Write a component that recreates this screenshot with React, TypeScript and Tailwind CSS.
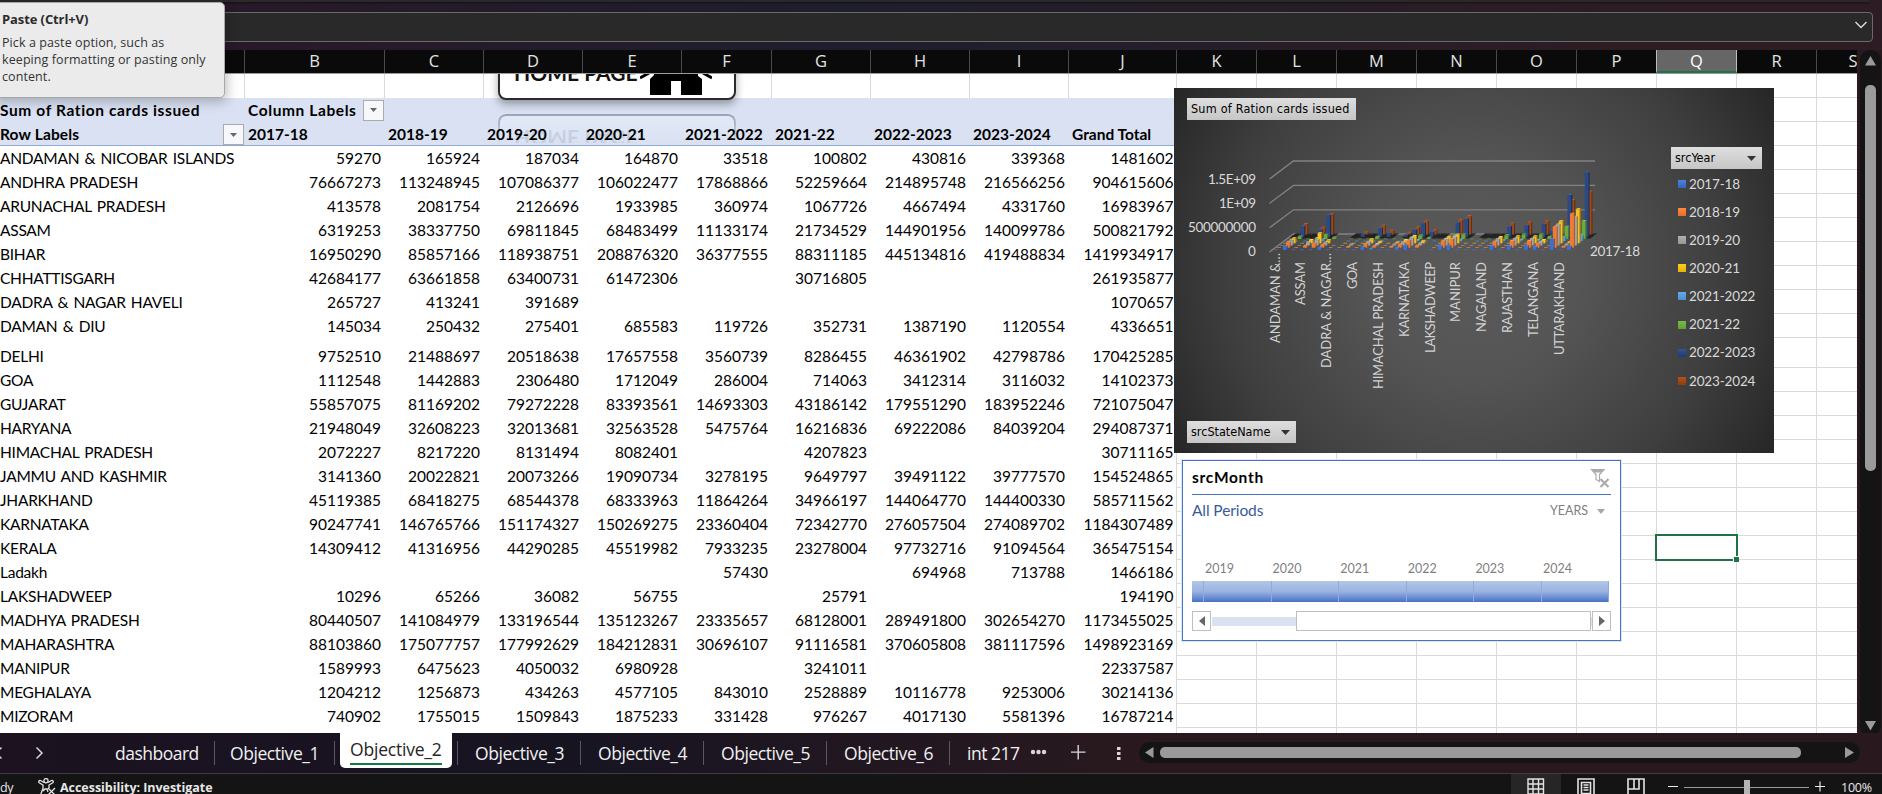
import React from "react";

const LATO = "font-['Lato','Noto_Sans',sans-serif]";
const UI = "font-['Open_Sans','Noto_Sans',sans-serif]";
const TAHOMA = "font-['DejaVu_Sans_Condensed','DejaVu_Sans',sans-serif] [font-stretch:condensed]";

const GRID = "grid grid-cols-[245px_140px_99px_99px_99px_90px_99px_99px_99px_108px_80px_80px_80px_80px_80px_80px_80px_80px_40px]";
const LETTERS = ["A", "B", "C", "D", "E", "F", "G", "H", "I", "J", "K", "L", "M", "N", "O", "P", "Q", "R", "S"];
const YEARS = ["2017-18", "2018-19", "2019-20", "2020-21", "2021-2022", "2021-22", "2022-2023", "2023-2024"];

type Row = [string, string];
const ROWS: Row[] = [
  ["ANDAMAN & NICOBAR ISLANDS", "59270,165924,187034,164870,33518,100802,430816,339368,1481602"],
  ["ANDHRA PRADESH", "76667273,113248945,107086377,106022477,17868866,52259664,214895748,216566256,904615606"],
  ["ARUNACHAL PRADESH", "413578,2081754,2126696,1933985,360974,1067726,4667494,4331760,16983967"],
  ["ASSAM", "6319253,38337750,69811845,68483499,11133174,21734529,144901956,140099786,500821792"],
  ["BIHAR", "16950290,85857166,118938751,208876320,36377555,88311185,445134816,419488834,1419934917"],
  ["CHHATTISGARH", "42684177,63661858,63400731,61472306,,30716805,,,261935877"],
  ["DADRA & NAGAR HAVELI", "265727,413241,391689,,,,,,1070657"],
  ["DAMAN & DIU", "145034,250432,275401,685583,119726,352731,1387190,1120554,4336651"],
  ["DELHI", "9752510,21488697,20518638,17657558,3560739,8286455,46361902,42798786,170425285"],
  ["GOA", "1112548,1442883,2306480,1712049,286004,714063,3412314,3116032,14102373"],
  ["GUJARAT", "55857075,81169202,79272228,83393561,14693303,43186142,179551290,183952246,721075047"],
  ["HARYANA", "21948049,32608223,32013681,32563528,5475764,16216836,69222086,84039204,294087371"],
  ["HIMACHAL PRADESH", "2072227,8217220,8131494,8082401,,4207823,,,30711165"],
  ["JAMMU AND KASHMIR", "3141360,20022821,20073266,19090734,3278195,9649797,39491122,39777570,154524865"],
  ["JHARKHAND", "45119385,68418275,68544378,68333963,11864264,34966197,144064770,144400330,585711562"],
  ["KARNATAKA", "90247741,146765766,151174327,150269275,23360404,72342770,276057504,274089702,1184307489"],
  ["KERALA", "14309412,41316956,44290285,45519982,7933235,23278004,97732716,91094564,365475154"],
  ["Ladakh", ",,,,57430,,694968,713788,1466186"],
  ["LAKSHADWEEP", "10296,65266,36082,56755,,25791,,,194190"],
  ["MADHYA PRADESH", "80440507,141084979,133196544,135123267,23335657,68128001,289491800,302654270,1173455025"],
  ["MAHARASHTRA", "88103860,175077757,177992629,184212831,30696107,91116581,370605808,381117596,1498923169"],
  ["MANIPUR", "1589993,6475623,4050032,6980928,,3241011,,,22337587"],
  ["MEGHALAYA", "1204212,1256873,434263,4577105,843010,2528889,10116778,9253006,30214136"],
  ["MIZORAM", "740902,1755015,1509843,1875233,331428,976267,4017130,5581396,16787214"],
];

const REST: (number | null)[][] = [
  [1, 3, 3, 3, 1, 2, 6, 6],
  [80, 125, 130, 130, 20, 75, 213, 227],
  [2, 3, 3, 3, 1, 2, 8, 8],
  [80, 140, 140, 145, 22, 90, 233, 250],
  [1, 2, 2, 2, 1, 1, 5, 5],
  [85, 140, 140, 145, 22, 90, 257, 275],
  [60, 80, 80, 70, 12, 45, 120, null],
  [3, 8, 8, 8, 1, 4, 15, 15],
  [220, 430, 435, 455, 90, 250, 860, 715],
  [5, 20, 20, 20, 3, 10, null, null],
  [70, 700, 595, 700, 110, 370, 1325, 885],
];
const DATA: (number | null)[][] = [
  ...ROWS.map(([, v]) => v.split(",").slice(0, 8).map((n) => (n === "" ? null : Number(n) / 1e6))),
  ...REST,
];
const COLORS: [string, string, string][] = [
  ["#3f6fce", "#2a4f99", "#5b86dc"],
  ["#f47a2f", "#a9521c", "#ff9a58"],
  ["#a3a3a3", "#6d6d6d", "#bdbdbd"],
  ["#f9c11c", "#a87f06", "#ffd652"],
  ["#4f9ee0", "#2f6a9c", "#73b5ec"],
  ["#69ab40", "#46752a", "#86c45e"],
  ["#2a4a86", "#182c52", "#46619a"],
  ["#a04a1a", "#6a2d0c", "#b5602c"],
];

function Chart3D() {
  const bars: React.ReactNode[] = [];
  for (let s = 7; s >= 0; s--) {
    const dx = (23.5 * (s + 0.5)) / 8;
    const dy = (17.5 * (s + 0.5)) / 8;
    DATA.forEach((row, c) => {
      const v = row[s];
      if (v === null) return;
      const x = 96 + 8.61 * (c + 0.33) + dx;
      const y = 163 - dy;
      const h = v / 20.6;
      if (s >= 6) {
        bars.push(<path key={`f${s}-${c}`} d={`M${x - 3} ${y + 1.6}h8.6l4 -3h-8.6z`} fill="#1d1d1d" opacity="0.85" />);
      }
      if (h < 0.9) {
        bars.push(<rect key={`${s}-${c}`} x={x} y={y - 0.6} width="3.6" height="0.9" fill={s >= 6 ? "#1e1e28" : COLORS[s][0]} opacity={s >= 2 && s < 6 ? 0.65 : 0.9} />);
        return;
      }
      bars.push(
        <g key={`${s}-${c}`}>
          <path d={`M${x + 3.6} ${y}v${-h}l1.3 -1v${h}z`} fill={COLORS[s][1]} />
          <path d={`M${x} ${y - h}l1.3 -1h3.6l-1.3 1z`} fill={COLORS[s][2]} />
          <rect x={x} y={y - h} width="3.7" height={h} fill={COLORS[s][0]} />
        </g>,
      );
    });
  }
  // text, baseline x, text start y, text length
  const labels: [string, number, number, number][] = [
    ["ANDAMAN &…", 105.5, 164, 78], ["ASSAM", 131.3, 174, 43], ["DADRA & NAGAR…", 157.2, 164, 103], ["GOA", 183, 174, 27],
    ["HIMACHAL PRADESH", 208.8, 174, 127], ["KARNATAKA", 234.7, 174, 75], ["LAKSHADWEEP", 260.5, 174, 91], ["MANIPUR", 286.2, 174, 60],
    ["NAGALAND", 312, 174, 70], ["RAJASTHAN", 338, 174, 71], ["TELANGANA", 363.6, 174, 75], ["UTTARAKHAND", 389.5, 174, 93],
  ];
  const axis: [string, number, number][] = [["1.5E+09", 91, 48], ["1E+09", 115, 37], ["500000000", 139, 68], ["0", 163, 8]];
  return (
    <svg width="600" height="365" className={`absolute inset-0 ${LATO}`}>
      {[73, 97.4, 121.8, 146].map((y) => (
        <path key={y} d={`M95.5 ${y + 18}L119.5 ${y}H421`} fill="none" stroke="#828282" strokeWidth="1.3" />
      ))}
      {bars}
      {axis.map(([t, y, w]) => (
        <text key={t} x={82 - w} y={y + 5.3} textLength={w} fontSize="13.5" fill="#d9d9d9">{t}</text>
      ))}
      {labels.map(([t, x, y, w]) => (
        <text key={t} transform={`translate(${x} ${(t.endsWith("…") ? y + 12 - 11 : y) + w + (t.endsWith("…") ? 12 : 0)}) rotate(-90)`} textLength={t.endsWith("…") ? w + 12 : w} fontSize="13" fill="#d2d2d2">{t}</text>
      ))}
      <text x="416" y="168" textLength="50" fontSize="13.5" fill="#d9d9d9">2017-18</text>
    </svg>
  );
}

const LEGEND = [
  "bg-linear-to-b from-[#4f82da] to-[#3763bd]",
  "bg-linear-to-b from-[#fb8a47] to-[#ea6d1a]",
  "bg-linear-to-b from-[#b0b0b0] to-[#969696]",
  "bg-linear-to-b from-[#ffca22] to-[#e8b400]",
  "bg-linear-to-b from-[#66abe8] to-[#4a8fd0]",
  "bg-linear-to-b from-[#77ba4c] to-[#62a038]",
  "bg-linear-to-b from-[#36558f] to-[#1c3a77]",
  "bg-linear-to-b from-[#ac5220] to-[#943c02]",
];

function PivotChart() {
  return (
    <div className="absolute left-[1174px] top-[38px] h-[365px] w-[600px] bg-[radial-gradient(circle_at_50%_50%,#5a5a5a_0%,#555555_30%,#3f3f3f_70%,#262626_100%)]">
      <Chart3D />
      <div className={`absolute left-[13px] top-[10px] flex h-[22px] w-[169px] items-center bg-linear-to-b from-[#dedede] to-[#c6c6c6] pt-px pl-1 text-[12.5px] tracking-[0.22px] whitespace-nowrap text-black ${TAHOMA}`}>Sum of Ration cards issued</div>
      <div className={`absolute left-[13px] top-[333px] flex h-[22px] w-[109px] items-center justify-between bg-linear-to-b from-[#dedede] to-[#c6c6c6] pt-px pr-1.5 pl-1 text-[12.5px] text-black ${TAHOMA}`}>
        srcStateName
        <svg width="9" height="5"><path d="M0 0h9l-4.5 5z" fill="#333" /></svg>
      </div>
      <div className={`absolute left-[497px] top-[59px] flex h-[22px] w-[91px] items-center justify-between bg-linear-to-b from-[#dedede] to-[#c6c6c6] pt-px pr-1.5 pl-1 text-[12.5px] text-black ${TAHOMA}`}>
        srcYear
        <svg width="9" height="5"><path d="M0 0h9l-4.5 5z" fill="#333" /></svg>
      </div>
      <div className={`absolute left-[504px] top-[82px] flex flex-col text-[13.5px] text-[#d9d9d9] ${LATO}`}>
        {YEARS.map((y, i) => (
          <div key={y} className="flex h-[28.1px] items-center gap-[3px] tracking-[-0.16px]">
            <span className={`size-2 ${LEGEND[i]}`} />{y}
          </div>
        ))}
      </div>
    </div>
  );
}

function Timeline() {
  return (
    <div className={`absolute left-[1182px] top-[410px] flex h-[181px] w-[439px] flex-col border border-[#4472c4] bg-white pl-[9px] ring-1 ring-[#dfe6f4] ${LATO}`}>
      <div className="flex h-[34px] w-[419px] items-center justify-between border-b border-[#4472c4]">
        <span className="text-[15.5px] font-bold tracking-[0.7px] text-black">srcMonth</span>
        <svg width="20" height="20" className="mr-px" fill="none" stroke="#ababab">
          <path d="M1.5 1.5h12.5l-4.5 5v7l-3.5 -2v-5z" fill="#fff" strokeWidth="1.2" />
          <path d="M1 1h13l-3 3.5h-7z" fill="#ababab" stroke="none" />
          <path d="M10.5 11l8 8M18.5 11l-8 8" strokeWidth="2.2" />
        </svg>
      </div>
      <div className="flex h-8 w-[419px] items-center justify-between pr-[6px]">
        <span className="text-[15.5px] tracking-[-0.1px] text-[#3a5a9b]">All Periods</span>
        <span className="flex items-center gap-[9px] text-[12.5px] text-[#7f7f7f]">YEARS
          <svg width="8" height="5"><path d="M0 0h8l-4 5z" fill="#a6a6a6" /></svg>
        </span>
      </div>
      <div className="mt-[31px] mb-px flex h-[22px] items-center pl-[13px] text-[12.5px] text-[#7f7f7f]">
        {["2019", "2020", "2021", "2022", "2023", "2024"].map((y) => <span key={y} className="w-[67.6px]">{y}</span>)}
      </div>
      <div className="flex h-[21px] w-[417px] bg-linear-to-b from-[#b4c6e8] via-[#9bb3e0] to-[#4472c4]">
        <span className="w-3 border-r border-[#8faadc]" />
        {[1, 2, 3, 4, 5, 6].map((n) => <span key={n} className="flex-1 border-r border-[#8faadc]" />)}
      </div>
      <div className="mt-[9px] flex h-5 w-[419px] items-center">
        <span className="flex h-5 w-[19px] items-center justify-center border border-[#bfbfbf]"><svg width="6" height="10"><path d="M6 0v10l-6 -5z" fill="#666" /></svg></span>
        <span className="ml-px h-[9px] w-[84px] bg-[#d9e1f3]" />
        <span className="h-5 w-[295px] border border-[#bfbfbf] bg-white" />
        <span className="h-[9px] w-px bg-[#d9e1f3]" />
        <span className="flex h-5 w-[19px] items-center justify-center border border-[#bfbfbf]"><svg width="6" height="10"><path d="M0 0v10l6 -5z" fill="#666" /></svg></span>
      </div>
    </div>
  );
}

function HomeButton() {
  return (
    <div className="absolute left-[470px] top-[24px] h-[96px] w-[300px] overflow-hidden">
      <div className="absolute left-[28px] top-[-30px] h-[56px] w-[238px] rounded-lg border-2 border-[#2b2b2b] bg-white shadow-[0_4px_8px_rgba(0,0,0,0.35)]" />
      <div className={`absolute left-[44px] top-[-13px] text-[21px] leading-6 font-bold whitespace-nowrap text-[#111] ${LATO}`}>HOME PAGE</div>
      <svg className="absolute left-[170px] top-0" width="72" height="22">
        <path d="M10 21V5L14 1V0H58V2L62 5V21H41V7H31V21z" fill="#000" />
        <path d="M0 4L9 -1M72 4L63 -1" stroke="#000" strokeWidth="3" />
      </svg>
      <div className="absolute left-[28px] top-[40px] h-[40px] w-[238px] rounded-t-lg border-2 border-b-0 border-[#8793a8] bg-[#e6edf8] opacity-80 [mask-image:linear-gradient(to_bottom,black,transparent_75%)]" />
      <div className={`absolute left-[44px] top-[55px] h-[14px] -scale-y-100 overflow-hidden text-[21px] font-bold whitespace-nowrap text-[#98a2b6] opacity-30 ${LATO}`}>
        <div className="-mt-[7px] leading-6">HOME PAGE</div>
      </div>
    </div>
  );
}

function DropButton() {
  return (
    <span className="flex size-[21px] shrink-0 items-center justify-center border border-[#ababab] bg-[#f6f8fb]">
      <svg width="7" height="4"><path d="M0 0h7l-3.5 4z" fill="#666" /></svg>
    </span>
  );
}

function EmptyCells() {
  return <>{LETTERS.slice(10).map((l) => <span key={l} className={l === "S" ? "border-b border-[#dadada]" : "border-r border-b border-[#dadada]"} />)}</>;
}

function Sheet() {
  return (
    <div className={`relative h-[683px] w-[1857px] overflow-hidden bg-white text-black ${LATO}`}>
      <div className={`${GRID} h-6 border-b border-[#9a9a9a] bg-[#0a0a0a] text-[16.5px] leading-[22px] text-[#e4e4e4] ${UI}`}>
        {LETTERS.map((l) => (
          <span key={l} className={`flex h-[23px] justify-center ${l === "Q" ? "-ml-px border-x border-b-2 border-x-[#bdbdbd] border-b-[#1f7246] bg-[#666] text-white" : l === "S" ? "pl-[32px]" : "border-r border-[#4a4a4a]"}`}>{l}</span>
        ))}
      </div>
      <div className={`${GRID} h-6`}>
        {LETTERS.map((l, i) => <span key={l} className={`border-[#dadada] ${l === "S" ? "" : "border-r"} ${i > 9 ? "border-b" : ""}`} />)}
      </div>
      <div className={`${GRID} h-6 bg-[#d9e1f2] text-[15.5px] font-bold whitespace-nowrap`}>
        <span className="flex items-center pt-px tracking-[0.62px]">Sum of Ration cards issued</span>
        <span className="flex items-center justify-between pr-px pl-[3px] tracking-[0.6px]"><span>Column Labels</span><DropButton /></span>
        <span className="col-span-8" />
        <span className="col-span-9 grid grid-cols-[80px_80px_80px_80px_80px_80px_80px_80px_40px] bg-white"><EmptyCells /></span>
      </div>
      <div className={`${GRID} relative h-6 bg-[#d9e1f2]`}>
        <span className="col-span-10 border-b border-[#8ea9db]" />
        <span className="col-span-9 grid grid-cols-[80px_80px_80px_80px_80px_80px_80px_80px_40px] bg-white"><EmptyCells /></span>
      </div>
      {ROWS.map(([name, vals]) => (
        <div key={name} className={`${GRID} ${name === "DELHI" ? "h-[30px]" : "h-6"} text-[15.5px] whitespace-nowrap`}>
          <span className="flex items-end leading-6 tracking-[-0.25px] [word-spacing:1.5px]">{name}</span>
          {vals.split(",").map((v, i) => (
            <span key={i} className={`flex items-end justify-end leading-6 ${i === 8 ? "border-r border-[#dadada] pr-[2.5px]" : "pr-1"}`}>{v}</span>
          ))}
          <EmptyCells />
        </div>
      ))}
      <div className={`${GRID} h-6`}>
        {LETTERS.map((l, i) => <span key={l} className={i >= 9 && l !== "S" ? "border-r border-[#dadada]" : ""} />)}
      </div>
      <HomeButton />
      <div className={`${GRID} absolute top-[73px] left-0 h-6 text-[15.5px] font-bold whitespace-nowrap`}>
        <span className="flex h-[23px] items-center justify-between pr-px tracking-[0.15px]">Row Labels<DropButton /></span>
        {[...YEARS, "Grand Total"].map((y) => <span key={y} className="flex h-[23px] items-center pl-[3px]">{y}</span>)}
      </div>
      <PivotChart />
      <Timeline />
      <div className="absolute left-[1655px] top-[484px] h-[27px] w-[83px] border-2 border-[#1f7246]">
        <span className="absolute -right-[3px] -bottom-[3px] size-[6px] border-t border-l border-white bg-[#1f7246]" />
      </div>
    </div>
  );
}

function Tab({ label, className, text }: { label: string; className: string; text: string }) {
  return (
    <div className={`flex h-6 shrink-0 items-center border-r border-[#5b565f] ${className}`}>
      <span className={`whitespace-nowrap ${text}`}>{label}</span>
    </div>
  );
}

function TabBar() {
  return (
    <div className={`flex h-10 items-start bg-linear-to-r from-[#1c1220] via-[#171422] via-30% to-[#29191f] to-60% text-[17.5px] text-[#f0f0f0] ${UI}`}>
      <div className="flex h-full w-[115px] shrink-0 items-center">
        <svg width="44" height="14" fill="none" stroke="#d6d6d6" strokeWidth="1.5"><path d="M1.5 1.5L-4 7l5.5 5.5M36.5 1.5L42 7l-5.5 5.5" /></svg>
      </div>
      <Tab label="dashboard" className="mt-2 w-[100px]" text="tracking-[-0.5px]" />
      <Tab label="Objective_1" className="mt-2 w-[120px] pl-[15px]" text="tracking-[-0.43px]" />
      <div className="relative ml-[5px] flex h-[35px] w-[112px] shrink-0 justify-center rounded-b-[5px] bg-white pt-1 text-[#262626]">
        <span className="h-[28px] w-[92px] border-b-2 border-[#107c41] text-[17.5px] leading-[24px] font-medium tracking-[-0.2px] whitespace-nowrap">Objective_2</span>
      </div>
      <div className="mt-2 h-6 w-[6px] shrink-0 border-r border-[#5b565f]" />
      <Tab label="Objective_3" className="mt-2 w-[123px] pl-[17px]" text="tracking-[-0.43px]" />
      <Tab label="Objective_4" className="mt-2 w-[123px] pl-[17px]" text="tracking-[-0.43px]" />
      <Tab label="Objective_5" className="mt-2 w-[123px] pl-[17px]" text="tracking-[-0.43px]" />
      <Tab label="Objective_6" className="mt-2 w-[123px] pl-[17px]" text="tracking-[-0.43px]" />
      <span className="mt-2 ml-[17px] w-[64px] shrink-0 leading-6 tracking-[-0.5px] whitespace-nowrap">int 217</span>
      <svg width="95" height="40" className="-ml-px mr-px shrink-0" fill="#d8d8d8">
        <circle cx="3" cy="19" r="2.2" /><circle cx="8.5" cy="19" r="2.2" /><circle cx="14" cy="19" r="2.2" />
        <path d="M41 18.4h14.5v1.4h-14.5zM47.5 12h1.4v14.5h-1.4z" />
        <path d="M87 14h3.5v3h-3.5zM87 19h3.5v3h-3.5zM87 24h3.5v3h-3.5z" />
      </svg>
      <div className="mt-[9px] ml-[13px] flex h-[21px] w-[721px] shrink-0 items-center rounded-full bg-[#141414] pl-[6px]">
        <svg width="9" height="11"><path d="M8.5 0v11l-8.5 -5.5z" fill="#9a9a9a" /></svg>
        <div className="ml-[6px] h-[11px] w-[641px] rounded-[5px] bg-[#9a9a9a]" />
        <svg width="9" height="11" className="ml-11"><path d="M0 0v11l9 -5.5z" fill="#9a9a9a" /></svg>
      </div>
    </div>
  );
}

function StatusBar() {
  return (
    <div className={`flex h-[21px] items-start border-t border-[#403c40] bg-[#141414] text-[12.5px] text-[#e8e8e8] ${UI}`}>
      <span className="w-[38px] leading-[27px] tracking-[-0.5px]">dy</span>
      <svg width="18" height="17" viewBox="0 0 18 17" className="mt-[4px]" fill="none" stroke="#e6e6e6" strokeWidth="1.3">
        <circle cx="8" cy="2.7" r="2.1" />
        <path d="M6 4.5L2.500 2.500a1.300 1.300 0 0 0 -1.300 2.200L5 7v3.500L2.800 16M10 4.500l3.500 -2a1.300 1.300 0 0 1 1.300 2.200L11 7v3M5 13l2 -2h2l1 3M10 10l7 7M17 10l-7 7" />
      </svg>
      <span className="ml-1 w-[1451px] leading-[27px] font-bold tracking-[-0.04px]">Accessibility: Investigate</span>
      <div className="flex h-full w-[50px] justify-center bg-[#262626] pt-1">
        <svg width="18" height="18" fill="none" stroke="#e4e4e4" strokeWidth="1.4"><path d="M1 1h15.500v16H1zM6 1v16M11.500 1v16M1 6h16M1 11h16M1 16h16" /></svg>
      </div>
      <svg width="68" height="18" className="mt-1 ml-4" fill="none" stroke="#e4e4e4" strokeWidth="1.6">
        <path d="M1 1h16v18H1zM4.500 4.500h9v11h-9zM6.500 7h5M6.500 9.500h5M6.500 12h5" />
        <path d="M51 1h16v18H51zM51 11h11V1M57 1v10" />
      </svg>
      <svg width="158" height="18" className="mt-[2px] ml-[23px]">
        <path d="M0 10.500h10M147 10.500h10M152 5.500v10" stroke="#eaeaea" strokeWidth="1.2" />
        <path d="M16 11.500h125" stroke="#9a9a9a" />
        <path d="M76 4h6v14h-6z" fill="#b4b4b4" />
      </svg>
      <span className="ml-[15px] leading-[27px] tracking-[-0.25px]">100%</span>
    </div>
  );
}

export default function App() {
  return (
    <div className="relative flex h-[794px] w-[1882px] flex-col overflow-hidden bg-[#281a20]">
      <div className="flex h-[50px] flex-col bg-linear-to-r from-[#2a1726] via-[#1f1e2c] via-45% to-[#2d1c23] to-90%">
        <div className="h-[2px] w-[1869px] bg-[#292929] shadow-[0_1px_2px_rgba(0,0,0,0.5)]" />
        <div className="mt-[10px] flex h-[30px] w-[1873px] items-center justify-end rounded-[4px] border border-[#6a6a6a] bg-[#292929] pr-[5px]">
          <svg width="12" height="8" className="-mt-1" fill="none" stroke="#dcdcdc" strokeWidth="1.4"><path d="M.5 1L6 6.500L11.500 1" /></svg>
        </div>
      </div>
      <div className="flex h-[683px]">
        <Sheet />
        <div className="ml-[3px] flex h-[686px] w-[21px] flex-col items-center rounded-[10px] bg-[#141414] pt-[6px]">
          <svg width="11" height="10"><path d="M5.500 0L11 9.500H0z" fill="#9a9a9a" /></svg>
          <div className="mt-[19px] h-[386px] w-[11px] shrink-0 rounded-[5px] bg-[#9a9a9a]" />
          <svg width="11" height="10" className="mt-auto mb-[5px] shrink-0"><path d="M0 0h11L5.500 9.500z" fill="#9a9a9a" /></svg>
        </div>
      </div>
      <TabBar />
      <StatusBar />
      <div className={`absolute -left-2 top-[2px] h-[96px] w-[233px] rounded-[5px] border border-[#a8a8a8] bg-[#ebebeb] pl-[9px] text-[#333] shadow-[2px_4px_12px_rgba(0,0,0,0.25)] ${UI}`}>
        <div className="mt-[7px] text-[13px] leading-[18px] font-bold tracking-[-0.1px] text-[#2b2b2b]">Paste (Ctrl+V)</div>
        <div className="mt-[6px] text-[12.5px] leading-[17px] tracking-[0.09px] whitespace-nowrap">Pick a paste option, such as<br />keeping formatting or pasting only<br />content.</div>
      </div>
    </div>
  );
}
